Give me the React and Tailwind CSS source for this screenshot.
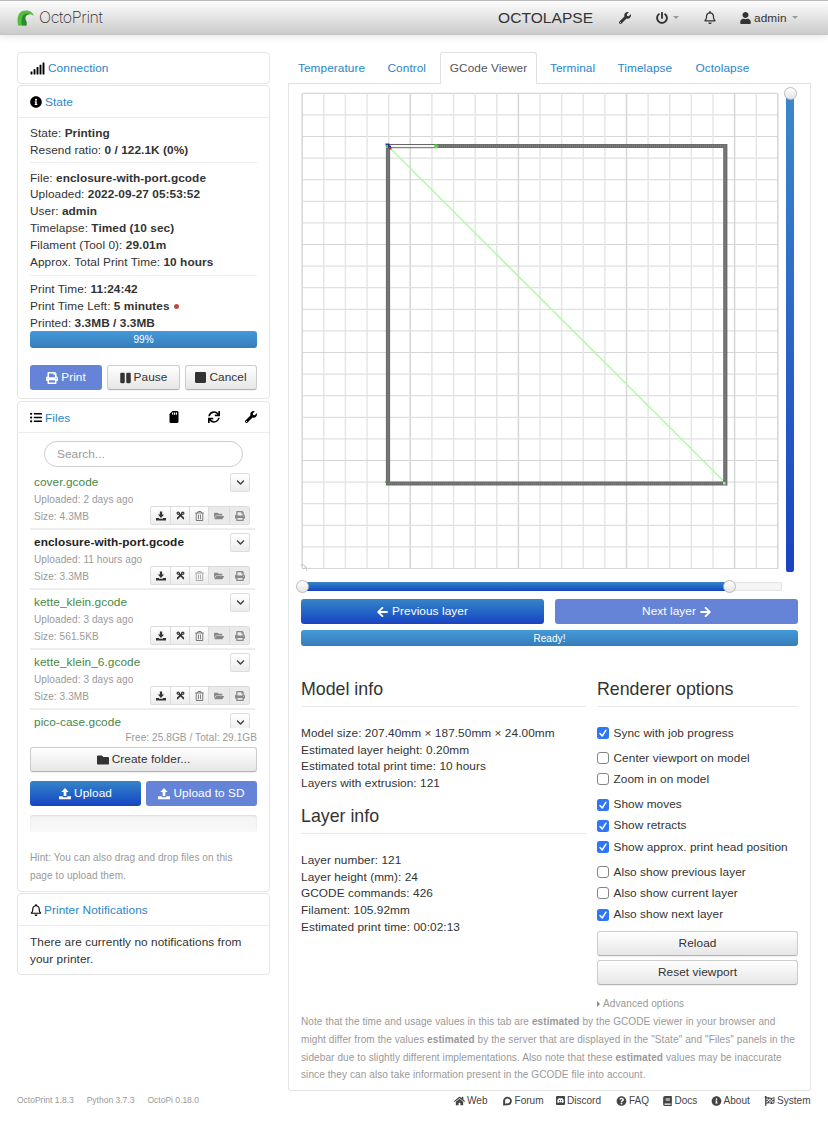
import React from 'react';
import {
  FaSignal, FaInfoCircle, FaPrint, FaPause, FaStop, FaListUl, FaSdCard, FaWrench, FaFolderOpen,
  FaFolder, FaRegBell, FaRegTrashAlt, FaArrowLeft, FaArrowRight, FaHome, FaDiscourse,
  FaQuestionCircle, FaBook, FaFlagCheckered, FaPowerOff, FaUser, FaCut, FaChevronDown, FaSync, FaDiscord,
} from 'react-icons/fa';

const btn = 'flex items-center justify-center rounded-[3px] border border-[#ccc] border-b-[#b3b3b3] bg-gradient-to-b from-white to-[#e6e6e6] text-[#333] shadow-[0_1px_1px_rgba(0,0,0,0.06)]';
const primary = 'flex items-center justify-center rounded-[3px] bg-gradient-to-b from-[#3784c8] to-[#1a42c2] text-white';
const primaryOff = 'flex items-center justify-center rounded-[3px] bg-[#6584d7] text-white';
const bar = 'flex items-center justify-center rounded-[3px] bg-gradient-to-b from-[#4499da] to-[#367db9] text-white text-[10px]';
const small = 'text-[10.050px] tracking-[0.080px] text-[#999]';

function Transfer({ up }) {
  return (
    <svg viewBox="0 0 16 16" className="h-[12px] w-[12px]" fill="currentColor">
      {up ? <path d="M8 0l4.800 5.200H9.800v5.300H6.200V5.200h-3z" /> : <path d="M8 11L3.200 5.800h3V1h3.600v4.800h3z" />}
      <path d="M0 11h5v1.200h6V11h5v4H0z" />
    </svg>
  );
}

function Caret() {
  return <span className="h-0 w-0 border-x-[3.5px] border-t-[3.5px] border-x-transparent border-t-[#999]" />;
}

function Navbar() {
  return (
    <header className="flex h-[35px] items-center border-t border-b border-t-[#bbb] border-b-[#c4c4c4] bg-gradient-to-b from-[#fdfdfd] to-[#cbcbcb] pl-[17px] text-[#333] shadow-[0_1px_8px_rgba(0,0,0,0.12)]">
      <svg viewBox="0 0 17 16" className="h-[16px] w-[17px]">
        <path d="M1 15.500C-0.300 8 0.800 0.600 9 0.600c5 0 7.200 2.600 7.700 5.400C15 4.500 13 4 11 4.600 8 5.500 7.500 9 9.600 12l-.1 3.500z" fill="#52bd3c" />
        <path d="M5 15.500C4 10 4.600 6.200 7.600 4.300c1.800-1.100 4.600-1 5.200-.1L11 4.600C8 5.500 7.500 9 9.600 12l-.1 3.500z" fill="#2a8a2e" />
      </svg>
      <span className="ml-[5px] w-[66px] whitespace-nowrap font-[Inter,sans-serif] text-[16px] font-extralight tracking-[-0.400px] text-[#333]">OctoPrint</span>
      <span className="ml-[393px] w-[95px] whitespace-nowrap text-[15.540px] leading-[20px]">OCTOLAPSE</span>
      <FaWrench className="ml-[26px] h-[12px] w-[12px]" />
      <FaPowerOff className="ml-[25px] h-[12px] w-[12px]" />
      <span className="ml-[5px] flex"><Caret /></span>
      <FaRegBell className="ml-[25px] h-[13px] w-[12px]" />
      <FaUser className="ml-[24px] h-[12px] w-[11px]" />
      <span className="ml-[3px] w-[33px] pt-[2px]">admin</span>
      <span className="ml-[5px] flex"><Caret /></span>
    </header>
  );
}

function PanelHead({ icon, title, children, size = 'h-[32px] border-b' }) {
  return (
    <div className={'flex items-center border-[#ececec] px-[12px] text-black ' + size}>
      {icon}
      <span className={size === 'h-[30px]' ? 'text-[#2a85c8]' : 'pt-[2px] text-[#2a85c8]'}>{title}</span>
      {children}
    </div>
  );
}

const panel = 'rounded-[4px] border border-[#e6e6e6]';
const B = ({ children }) => <b className="font-bold">{children}</b>;

function StatePanel() {
  return (
    <section className={panel + ' mt-px h-[314px]'}>
      <PanelHead icon={<FaInfoCircle className="mr-[3px] h-[12px] w-[12px]" />} title="State" />
      <div className="px-[12px] pt-[7px] leading-[16.900px]">
        <div className="h-[38px] border-b border-[#eee]">
          <div>State: <B>Printing</B></div>
          <div>Resend ratio: <B>0 / 122.1K (0%)</B></div>
        </div>
        <div className="mt-[6.500px] h-[106px] border-b border-[#eee]">
          <div>File: <B>enclosure-with-port.gcode</B></div>
          <div>Uploaded: <B>2022-09-27 05:53:52</B></div>
          <div>User: <B>admin</B></div>
          <div>Timelapse: <B>Timed (10 sec)</B></div>
          <div>Filament (Tool 0): <B>29.01m</B></div>
          <div>Approx. Total Print Time: <B>10 hours</B></div>
        </div>
        <div className="mt-[5.500px] h-[50px]">
          <div>Print Time: <B>11:24:42</B></div>
          <div className="flex items-center"><span>Print Time Left: <B>5 minutes</B></span><span className="ml-[4px] h-[5px] w-[5px] rounded-full bg-[#b94a48]" /></div>
          <div>Printed: <B>3.3MB / 3.3MB</B></div>
        </div>
        <div className={bar + ' h-[17px] pt-[2px]'}>99%</div>
        <div className="mt-[17px] flex gap-[5px]">
          <div className={primaryOff + ' h-[25px] w-[72px] gap-[3px]'}><FaPrint className="h-[12px] w-[12px]" />Print</div>
          <div className={btn + ' h-[25px] w-[73px] gap-[3px]'}><FaPause className="h-[12px] w-[11px]" />Pause</div>
          <div className={btn + ' h-[25px] w-[72px] gap-[3px]'}><FaStop className="h-[13px] w-[11px]" />Cancel</div>
        </div>
      </div>
    </section>
  );
}

const files = [
  { name: 'cover.gcode', when: '2 days ago', size: '4.3MB' },
  { name: 'enclosure-with-port.gcode', when: '11 hours ago', size: '3.3MB', active: true },
  { name: 'kette_klein.gcode', when: '3 days ago', size: '561.5KB' },
  { name: 'kette_klein_6.gcode', when: '3 days ago', size: '3.3MB' },
  { name: 'pico-case.gcode' },
];

const Mini = ({ children }) => <span className="scale-[0.850]">{children}</span>;

function FileRow({ f }) {
  return (
    <div className="h-[60px] border-b-2 border-[#eee] pl-[4px] pr-[5px]">
      <div className="flex h-[21px] items-start justify-between pt-[3px]">
        <span className={f.active ? 'pt-px font-bold leading-[17px] text-[#222]' : 'pt-px leading-[17px] text-[#468847]'}>{f.name}</span>
        <span className="flex h-[19px] w-[20px] shrink-0 items-center justify-center rounded-[2px] border border-[#ddd] bg-gradient-to-b from-white to-[#ececec]"><FaChevronDown className="h-[9px] w-[9px] text-[#444]" /></span>
      </div>
      {f.when && (
        <>
          <div className={small + ' h-[17px] leading-[17px]'}>Uploaded: {f.when}</div>
          <div className="flex h-[18px] items-start justify-between">
            <span className={small + ' leading-[17px]'}>Size: {f.size}</span>
            <div className="-mt-[2px] flex h-[19px] w-[100px] divide-x divide-[#ddd] overflow-hidden rounded-[2px] border border-[#ddd] bg-gradient-to-b from-white to-[#ececec] text-[#333]">
              <span className="flex w-[20px] items-center justify-center"><Mini><Transfer /></Mini></span>
              <span className="flex w-[19px] items-center justify-center"><FaCut className="h-[9px] w-[9px] rotate-90" /></span>
              <span className={f.active ? 'flex w-[19px] items-center justify-center text-[#aaa]' : 'flex w-[19px] items-center justify-center text-[#777]'}><FaRegTrashAlt className="h-[10px] w-[9px]" /></span>
              <span className="flex w-[21px] items-center justify-center bg-[#eaeaea] text-[#888]"><FaFolderOpen className="h-[10px] w-[10px]" /></span>
              <span className="flex w-[19px] items-center justify-center bg-[#eaeaea] text-[#888]"><FaPrint className="h-[10px] w-[10px]" /></span>
            </div>
          </div>
        </>
      )}
    </div>
  );
}

function FilesPanel() {
  return (
    <section className={panel + ' mt-px h-[491px]'}>
      <PanelHead size="h-[31px] border-b" icon={<FaListUl className="mr-[3px] h-[13px] w-[12px]" />} title="Files">
        <FaSdCard className="ml-auto h-[12px] w-[12px]" />
        <FaSync className="ml-[28px] h-[12px] w-[12px]" />
        <FaWrench className="ml-[25px] h-[12px] w-[12px]" />
      </PanelHead>
      <div className="px-[12px] pt-[8px]">
        <div className="mx-auto flex h-[26px] w-[199px] items-center rounded-full border border-[#ccc] pl-[12px] text-[#999]">Search...</div>
        <div className="mt-[3px] h-[258px] w-[225px] overflow-hidden">
          {files.map((f) => <FileRow key={f.name} f={f} />)}
        </div>
        <div className={small + ' h-[18px] text-right leading-[20px]'}>Free: 25.8GB / Total: 29.1GB</div>
        <div className={btn + ' mt-px h-[25px] gap-[3px]'}><FaFolder className="h-[12px] w-[12px]" />Create folder...</div>
        <div className="mt-[9px] flex gap-[5px]">
          <div className={primary + ' h-[25px] w-[111px] gap-[3px]'}><Transfer up />Upload</div>
          <div className={primaryOff + ' h-[25px] w-[111px] gap-[3px]'}><Transfer up />Upload to SD</div>
        </div>
        <div className="mt-[9px] h-[17px] rounded-[3px] bg-gradient-to-b from-[#f4f4f4] to-[#f9f9f9] shadow-[inset_0_1px_2px_rgba(0,0,0,0.1)]" />
        <p className={small + ' mt-[17px] leading-[17.800px]'}>Hint: You can also drag and drop files on this<br />page to upload them.</p>
      </div>
    </section>
  );
}

function GcodeCanvas() {
  const lines = Array.from({ length: 23 }, (_, i) => i);
  return (
    <svg viewBox="0 0 484 482" className="h-[482px] w-[484px] shrink-0" fill="none">
      {lines.map((i) => (
        <g key={i}>
          <path d={`M${3.2 + i * 21.62} 3.500V478.800`} stroke={i % 5 === 0 || i === 22 ? '#d6d6d6' : '#e6e6e6'} strokeWidth="1.500" />
          <path d={`M3.200 ${3.3 + i * 21.6}H478.900`} stroke={(22 - i) % 5 === 0 || i === 0 ? '#d6d6d6' : '#e0e0e0'} strokeWidth="1.200" />
        </g>
      ))}
      <path d="M90.500 57.500L424.500 391" stroke="#b4f9a8" strokeWidth="1.500" />
      <path d="M137 56H426.300V393.500H89V56" stroke="#6c6c6c" strokeWidth="4.200" />
      <path d="M137 56H426.300V393.500H89V56" stroke="#828282" strokeWidth="1.500" strokeDasharray="1 1" />
      <path d="M89 54.500H137M89 57.700H137" stroke="#555" strokeWidth="0.900" />
      <path d="M89 56.100H137" stroke="#f4f4f4" strokeWidth="1.500" />
      <path d="M86.500 53.500h4v2h-4zM89 55.500h3v2h-3z" fill="#26329c" />
      <rect x="87" y="56" width="2" height="2" fill="#4c4" />
      <rect x="90" y="57" width="2.500" height="2.500" fill="#c22" />
      <circle cx="137" cy="56.300" r="2" fill="#4be536" />
      <path d="M86.500 391.500l3 3" stroke="#393" strokeWidth="1.500" />
      <rect x="424" y="392" width="2.500" height="2.500" fill="#9e9" />
      <path d="M1.500 475.300c4-1.500 6.500 1.500 6 5.500M3.500 478.500h2.500v-2" stroke="#c4c4c4" />
    </svg>
  );
}

const Knob = ({ className }) => (
  <span className={'absolute h-[13px] w-[13px] rounded-full border border-[#bbb] bg-gradient-to-b from-white to-[#e4e4e4] ' + className} />
);

function Check({ on, children, className = '' }) {
  return (
    <div className={'flex h-[21.200px] items-center ' + className}>
      {on ? (
        <svg viewBox="0 0 12 12" className="mr-[4.500px] h-[12px] w-[12px]">
          <rect width="12" height="12" rx="2.500" fill="#2f76f6" />
          <path d="M3 6.500L5.200 9L9 3.200" fill="none" stroke="white" strokeWidth="1.500" strokeLinecap="round" strokeLinejoin="round" />
        </svg>
      ) : <span className="mr-[4.500px] h-[12px] w-[12px] rounded-[3px] border border-[#858585] bg-white" />}
      <span className="whitespace-nowrap">{children}</span>
    </div>
  );
}

const heading = 'h-[30px] border-b border-[#e8e8e8] text-[17.800px] tracking-normal leading-[24px]';

function GcodeTab() {
  return (
    <section className="h-[1007px] rounded-b-[3px] border border-t-0 border-[#e4e4e4] px-[12px] pt-[6px]">
      <div className="flex h-[487px]">
        <div className="-ml-[2px] flex"><GcodeCanvas /></div>
        <div className="relative ml-[3px] mt-[3px] h-[479px] w-[8px] rounded-[2px] bg-gradient-to-b from-[#3b88cb] via-[#2b66c6] to-[#1a42c2]">
          <Knob className="-left-[2.500px] -top-[6px]" />
        </div>
      </div>
      <div className="relative mt-[5px] h-[9px] w-[481px] rounded-[2px] bg-[#f6f6f6] shadow-[inset_0_0_1px_1px_#e2e2e2]">
        <div className="ml-[2px] h-[9px] w-[427px] bg-gradient-to-b from-[#3784c8] to-[#1a42c2]" />
        <Knob className="-left-[5px] -top-[2px]" />
        <Knob className="left-[422px] -top-[2px]" />
      </div>
      <div className="mt-[8px] flex justify-between">
        <div className={primary + ' h-[25px] w-[243px] gap-[4px]'}><FaArrowLeft className="h-[12px] w-[11px]" />Previous layer</div>
        <div className={primaryOff + ' h-[25px] w-[243px] gap-[4px]'}>Next layer<FaArrowRight className="h-[12px] w-[11px]" /></div>
      </div>
      <div className={bar + ' mt-[6px] h-[16px] rounded-[2px]'}>Ready!</div>
      <div className="mt-[31px] flex h-[336px] justify-between">
        <div className="w-[285px] leading-[16.900px]">
          <h2 className={heading}>Model info</h2>
          <div className="mt-[17.600px]">
            <div>Model size: 207.40mm × 187.50mm × 24.00mm</div>
            <div>Estimated layer height: 0.20mm</div>
            <div>Estimated total print time: 10 hours</div>
            <div>Layers with extrusion: 121</div>
          </div>
          <h2 className={heading + ' mt-[11.800px]'}>Layer info</h2>
          <div className="mt-[17.600px]">
            <div>Layer number: 121</div>
            <div>Layer height (mm): 24</div>
            <div>GCODE commands: 426</div>
            <div>Filament: 105.92mm</div>
            <div>Estimated print time: 00:02:13</div>
          </div>
        </div>
        <div className="w-[201px]">
          <h2 className={heading}>Renderer options</h2>
          <div className="mt-[15.500px]">
            <Check on>Sync with job progress</Check>
            <Check className="mt-[4px]">Center viewport on model</Check>
            <Check>Zoom in on model</Check>
            <Check on className="mt-[4px]">Show moves</Check>
            <Check on>Show retracts</Check>
            <Check on>Show approx. print head position</Check>
            <Check className="mt-[4px]">Also show previous layer</Check>
            <Check>Also show current layer</Check>
            <Check on>Also show next layer</Check>
          </div>
          <div className={btn + ' mt-[6px] h-[25px]'}>Reload</div>
          <div className={btn + ' mt-[4px] h-[25px]'}>Reset viewport</div>
          <div className={small + ' mt-[10px] flex items-center leading-[18px]'}>
            <span className="mr-[3px] h-0 w-0 border-y-[3px] border-l-[3.5px] border-y-transparent border-l-[#888]" />Advanced options
          </div>
        </div>
      </div>
      <p className={small + ' whitespace-nowrap leading-[17.800px]'}>
        Note that the time and usage values in this tab are <B>estimated</B> by the GCODE viewer in your browser and<br />
        might differ from the values <B>estimated</B> by the server that are displayed in the "State" and "Files" panels in the<br />
        sidebar due to slightly different implementations. Also note that these <B>estimated</B> values may be inaccurate<br />
        since they can also take information present in the GCODE file into account.
      </p>
    </section>
  );
}

function Tabs() {
  return (
    <nav className="flex h-[32px] text-[#2a85c8]">
      <div className="flex w-[152px] items-center border-b border-[#e0e0e0] pl-[10px] pt-[2px]"><span className="w-[89.500px]">Temperature</span><span>Control</span></div>
      <div className="flex w-[97px] items-center justify-center rounded-t-[3px] border border-b-0 border-[#e0e0e0] text-[#555]">GCode Viewer</div>
      <div className="flex flex-1 items-center border-b border-[#e0e0e0] pl-[13px] pt-[2px]"><span className="w-[67.500px]">Terminal</span><span className="w-[78px]">Timelapse</span><span>Octolapse</span></div>
    </nav>
  );
}

const ic = 'h-[10px] w-[11px]';
const links = [
  ['Web', <FaHome className={ic} />, 'w-[47.500px]'],
  ['Forum', <FaDiscourse className={ic} />, 'w-[54.500px]'],
  ['Discord', <span className="flex h-[9px] w-[9px] items-center justify-center rounded-[1px] bg-[#444] text-white"><FaDiscord className="h-[7px] w-[7px]" /></span>, 'w-[60px]'],
  ['FAQ', <FaQuestionCircle className={ic} />, 'w-[45.500px]'],
  ['Docs', <FaBook className={ic} />, 'w-[49px]'],
  ['About', <FaInfoCircle className={ic} />, 'w-[53.500px]'],
  ['System', <FaFlagCheckered className={ic} />, 'w-[47px]'],
];

export default function App() {
  return (
    <div className="h-[1147px] w-[828px] overflow-hidden bg-white font-['Liberation_Sans',Arial,sans-serif] text-[11.830px] leading-[17px] tracking-[0.060px] text-[#333]">
      <Navbar />
      <div className="flex pt-[17px]">
        <aside className="ml-[17px] w-[253px]">
          <section className={panel + ' h-[32px]'}><PanelHead size="h-[30px]" icon={<FaSignal className="mr-[3px] h-[13px] w-[15px]" />} title="Connection" /></section>
          <StatePanel />
          <div className="h-px" />
          <FilesPanel />
          <section className={panel + ' mt-px h-[82px]'}>
            <PanelHead icon={<FaRegBell className="mr-[2px] h-[12px] w-[12px]" />} title="Printer Notifications" />
            <p className="whitespace-nowrap px-[12px] pt-[8px] leading-[16.900px]">There are currently no notifications from<br />your printer.</p>
          </section>
        </aside>
        <main className="ml-[18px] w-[523px]">
          <Tabs />
          <GcodeTab />
        </main>
      </div>
      <footer className="ml-[17px] flex h-[19px] w-[794px] items-center text-[10.050px] tracking-normal text-[#444]">
        <span className="flex gap-[13px] text-[8.500px] text-[#999]"><span>OctoPrint 1.8.3</span><span>Python 3.7.3</span><span>OctoPi 0.18.0</span></span>
        <div className="ml-auto flex">
          {links.map(([t, i, w]) => <span key={t} className={'flex items-center gap-[2px] whitespace-nowrap ' + w}>{i}{t}</span>)}
        </div>
      </footer>
    </div>
  );
}
